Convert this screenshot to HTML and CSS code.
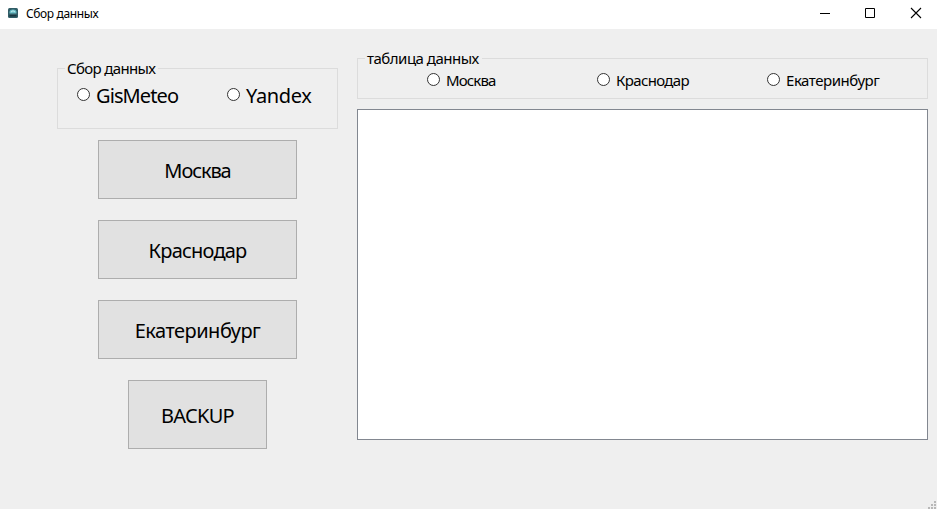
FILE: index.html
```html
<!DOCTYPE html>
<html lang="ru">
<head>
<meta charset="utf-8">
<title>Сбор данных</title>
<link rel="stylesheet" href="styles.css">
</head>
<body>
<div class="window">
  <header class="titlebar">
    <svg class="app-icon" width="10" height="10" viewBox="0 0 10 10">
      <rect width="10" height="10" rx="1.5" fill="#315c66"/>
      <path d="M1.5 5.5V4Q1.5 1.5 5 1.5T8.500 4V5.500Z" fill="#68bdc6"/>
      <path d="M3 4Q5 1.500 7 4" fill="none" stroke="#c5edef"/>
      <path d="M1.500 7h7v1.500h-7z" fill="#17363f"/>
    </svg>
    <span class="title">Сбор данных</span>
    <div class="controls">
      <svg width="46" height="29" viewBox="0 0 46 29"><path d="M20 13.500h10" stroke="#000"/></svg>
      <svg width="46" height="29" viewBox="0 0 46 29"><path d="M19.500 8.500h9v9h-9z" fill="none" stroke="#000"/></svg>
      <svg width="46" height="29" viewBox="0 0 46 29"><path d="M19 8l10 10M29 8L19 18" stroke="#000" stroke-width="1.100"/></svg>
    </div>
  </header>
  <main class="content">
    <section class="left">
      <div class="group sources">
        <div class="legend"><span class="t-source">Сбор данных</span></div>
        <label class="option large"><i class="radio"></i><span class="t-gis">GisMeteo</span></label>
        <label class="option large"><i class="radio"></i><span class="t-yandex">Yandex</span></label>
      </div>
      <div class="buttons">
        <button><span class="b-moscow">Москва</span></button>
        <button><span class="b-krasnodar">Краснодар</span></button>
        <button><span class="b-ekb">Екатеринбург</span></button>
        <button class="backup"><span class="b-backup">BACKUP</span></button>
      </div>
    </section>
    <section class="right">
      <div class="group cities">
        <div class="legend"><span class="t-table">таблица данных</span></div>
        <label class="option"><i class="radio"></i><span class="t-moscow">Москва</span></label>
        <label class="option"><i class="radio"></i><span class="t-krasnodar">Краснодар</span></label>
        <label class="option"><i class="radio"></i><span class="t-ekb">Екатеринбург</span></label>
      </div>
      <div class="output"></div>
    </section>
  </main>
  <svg class="grip" width="9" height="9" viewBox="0 0 9 9" fill="#b8b8b8"><path d="M6 1h2v2H6zM3 4h2v2H3zM6 4h2v2H6zM0 7h2v2H0zM3 7h2v2H3zM6 7h2v2H6z"/></svg>
</div>
</body>
</html>
```
FILE: styles.css
```css
* { box-sizing: border-box; }
body { margin: 0; font-family: "Noto Sans", sans-serif; color: #000; }
.window { position: relative; width: 937px; height: 509px; background: #efefef; overflow: hidden; }
.titlebar { display: flex; height: 29px; background: #fff; padding-left: 8px; }
.app-icon { margin-top: 8px; }
.title { margin-left: 8px; font-size: 12px; line-height: 28px; letter-spacing: -0.37px; white-space: nowrap; }
.controls { display: flex; margin-left: auto; margin-right: -1px; }
.content { display: flex; height: 480px; padding: 29px 9px 0 57px; gap: 19px; }
.left { width: 281px; padding-top: 10px; }
.right { width: 571px; }
.group { position: relative; display: flex; border: 1px solid #dcdcdc; }
.legend { position: absolute; left: 7px; top: -11px; padding: 0 3px 0 2px; background: #efefef; font-size: 15px; line-height: 20px; white-space: nowrap; }
.sources { height: 61px; padding: 16px 0 0 19px; }
.cities { height: 41px; padding: 11px 0 0 69px; }
.option { display: flex; flex: none; align-items: flex-start; height: 20px; font-size: 15px; line-height: 20px; white-space: nowrap; width: 170px; }
.option.large { width: 150px; height: 22px; font-size: 20px; line-height: 22px; }
.option:last-child { width: auto; }
.radio { width: 13px; height: 13px; margin: 3px 6px 0 0; border: 1px solid #333; border-radius: 50%; background: #fff; flex: none; }
.buttons { display: flex; flex-direction: column; gap: 21px; padding: 11px 0 0 41px; }
button { width: 199px; height: 59px; padding: 2px 0 0; border: 1px solid #adadad; border-radius: 0; background: #e1e1e1; color: #000; font: 20px "Noto Sans", sans-serif; }
.backup { width: 139px; height: 69px; margin-left: 30px; }
.output { height: 331px; margin-top: 10px; border: 1px solid #828790; background: #fff; }
.grip { position: absolute; right: 0; bottom: 0; }

/* Compact tracking for each caption */
.t-source { letter-spacing: -0.65px; }
.t-table { letter-spacing: -0.5px; }
.t-gis { letter-spacing: -0.9px; }
.t-yandex { letter-spacing: -0.35px; }
.t-moscow { letter-spacing: -0.85px; }
.t-krasnodar { letter-spacing: -0.65px; }
.t-ekb { letter-spacing: -0.45px; }
.b-moscow { letter-spacing: -1.1px; }
.b-krasnodar { letter-spacing: -0.8px; }
.b-ekb { letter-spacing: -0.5px; }
.b-backup { letter-spacing: -0.7px; }
```
